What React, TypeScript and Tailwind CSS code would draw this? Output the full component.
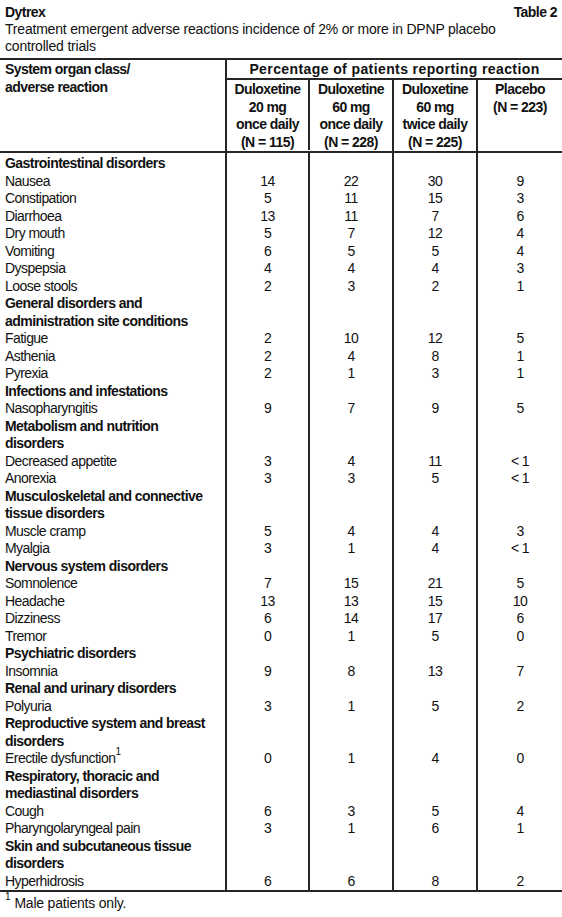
import React from "react";

type Row =
  | { kind: "cat"; text: string }
  | { kind: "item"; text: string; sup?: string; vals: [string, string, string, string] };

const rows: Row[] = [
  { kind: "cat", text: "Gastrointestinal disorders" },
  { kind: "item", text: "Nausea", vals: ["14", "22", "30", "9"] },
  { kind: "item", text: "Constipation", vals: ["5", "11", "15", "3"] },
  { kind: "item", text: "Diarrhoea", vals: ["13", "11", "7", "6"] },
  { kind: "item", text: "Dry mouth", vals: ["5", "7", "12", "4"] },
  { kind: "item", text: "Vomiting", vals: ["6", "5", "5", "4"] },
  { kind: "item", text: "Dyspepsia", vals: ["4", "4", "4", "3"] },
  { kind: "item", text: "Loose stools", vals: ["2", "3", "2", "1"] },
  { kind: "cat", text: "General disorders and" },
  { kind: "cat", text: "administration site conditions" },
  { kind: "item", text: "Fatigue", vals: ["2", "10", "12", "5"] },
  { kind: "item", text: "Asthenia", vals: ["2", "4", "8", "1"] },
  { kind: "item", text: "Pyrexia", vals: ["2", "1", "3", "1"] },
  { kind: "cat", text: "Infections and infestations" },
  { kind: "item", text: "Nasopharyngitis", vals: ["9", "7", "9", "5"] },
  { kind: "cat", text: "Metabolism and nutrition" },
  { kind: "cat", text: "disorders" },
  { kind: "item", text: "Decreased appetite", vals: ["3", "4", "11", "< 1"] },
  { kind: "item", text: "Anorexia", vals: ["3", "3", "5", "< 1"] },
  { kind: "cat", text: "Musculoskeletal and connective" },
  { kind: "cat", text: "tissue disorders" },
  { kind: "item", text: "Muscle cramp", vals: ["5", "4", "4", "3"] },
  { kind: "item", text: "Myalgia", vals: ["3", "1", "4", "< 1"] },
  { kind: "cat", text: "Nervous system disorders" },
  { kind: "item", text: "Somnolence", vals: ["7", "15", "21", "5"] },
  { kind: "item", text: "Headache", vals: ["13", "13", "15", "10"] },
  { kind: "item", text: "Dizziness", vals: ["6", "14", "17", "6"] },
  { kind: "item", text: "Tremor", vals: ["0", "1", "5", "0"] },
  { kind: "cat", text: "Psychiatric disorders" },
  { kind: "item", text: "Insomnia", vals: ["9", "8", "13", "7"] },
  { kind: "cat", text: "Renal and urinary disorders" },
  { kind: "item", text: "Polyuria", vals: ["3", "1", "5", "2"] },
  { kind: "cat", text: "Reproductive system and breast" },
  { kind: "cat", text: "disorders" },
  { kind: "item", text: "Erectile dysfunction", sup: "1", vals: ["0", "1", "4", "0"] },
  { kind: "cat", text: "Respiratory, thoracic and" },
  { kind: "cat", text: "mediastinal disorders" },
  { kind: "item", text: "Cough", vals: ["6", "3", "5", "4"] },
  { kind: "item", text: "Pharyngolaryngeal pain", vals: ["3", "1", "6", "1"] },
  { kind: "cat", text: "Skin and subcutaneous tissue" },
  { kind: "cat", text: "disorders" },
  { kind: "item", text: "Hyperhidrosis", vals: ["6", "6", "8", "2"] },
];

const line = "border-[#262626]";

export default function App() {
  return (
    <div className="w-[562px] h-[917px] bg-white text-[#111] font-['Liberation_Sans',Arial,sans-serif] text-[14px] leading-[17.5px] tracking-[-0.55px]">
      <div className="px-[5px] pt-[4px] leading-[17px]">
        <div className="flex justify-between font-bold">
          <span>Dytrex</span>
          <span>Table 2</span>
        </div>
        <div className="tracking-[-0.2px]">
          Treatment emergent adverse reactions incidence of 2% or more in DPNP placebo
        </div>
        <div className="tracking-[-0.2px]">controlled trials</div>
      </div>

      <div className={`mt-[3px] border-t-2 border-b-2 ${line}`}>
        <div className={`grid grid-cols-[227px_83px_84px_84px_84px] border-b-2 ${line} font-bold`}>
          <div className={`row-span-2 border-r-2 ${line} pl-[5px] pt-[1px]`}>
            System organ class/
            <br />
            adverse reaction
          </div>
          <div
            className={`col-span-4 h-[20px] border-b-2 ${line} text-center pt-[1px] tracking-[0.4px]`}
          >
            Percentage of patients reporting reaction
          </div>
          <div className={`border-r-2 ${line} text-center h-[70px] pt-[1px]`}>
            Duloxetine
            <br />
            20 mg
            <br />
            once daily
            <br />
            (N = 115)
          </div>
          <div className={`border-r-2 ${line} text-center pt-[1px]`}>
            Duloxetine
            <br />
            60 mg
            <br />
            once daily
            <br />
            (N = 228)
          </div>
          <div className={`border-r-2 ${line} text-center pt-[1px]`}>
            Duloxetine
            <br />
            60 mg
            <br />
            twice daily
            <br />
            (N = 225)
          </div>
          <div className="text-center pt-[1px]">
            Placebo
            <br />
            (N = 223)
          </div>
        </div>

        <div className="grid grid-cols-[227px_83px_84px_84px_84px]">
          <div className={`h-[2px] border-r-2 ${line}`} />
          <div className={`h-[2px] border-r-2 ${line}`} />
          <div className={`h-[2px] border-r-2 ${line}`} />
          <div className={`h-[2px] border-r-2 ${line}`} />
          <div className="h-[2px]" />
          {rows.map((r, i) => (
            <React.Fragment key={i}>
              <div
                className={`h-[17.5px] whitespace-nowrap border-r-2 ${line} pl-[5px] ${
                  r.kind === "cat" ? "font-bold" : ""
                }`}
              >
                {r.text}
                {r.kind === "item" && r.sup ? (
                  <sup className="text-[10px] leading-none align-[3px] tracking-normal">{r.sup}</sup>
                ) : null}
              </div>
              {[0, 1, 2, 3].map((c) => (
                <div
                  key={c}
                  className={`h-[17.5px] text-center ${c < 3 ? `border-r-2 ${line}` : ""}`}
                >
                  {r.kind === "item" ? r.vals[c] : ""}
                </div>
              ))}
            </React.Fragment>
          ))}
        </div>
      </div>

      <div className="px-[5px] pt-[3px] tracking-[-0.2px]">
        <sup className="text-[10px] leading-none align-[3px] mr-[4px]">1</sup>
        Male patients only.
      </div>
    </div>
  );
}
